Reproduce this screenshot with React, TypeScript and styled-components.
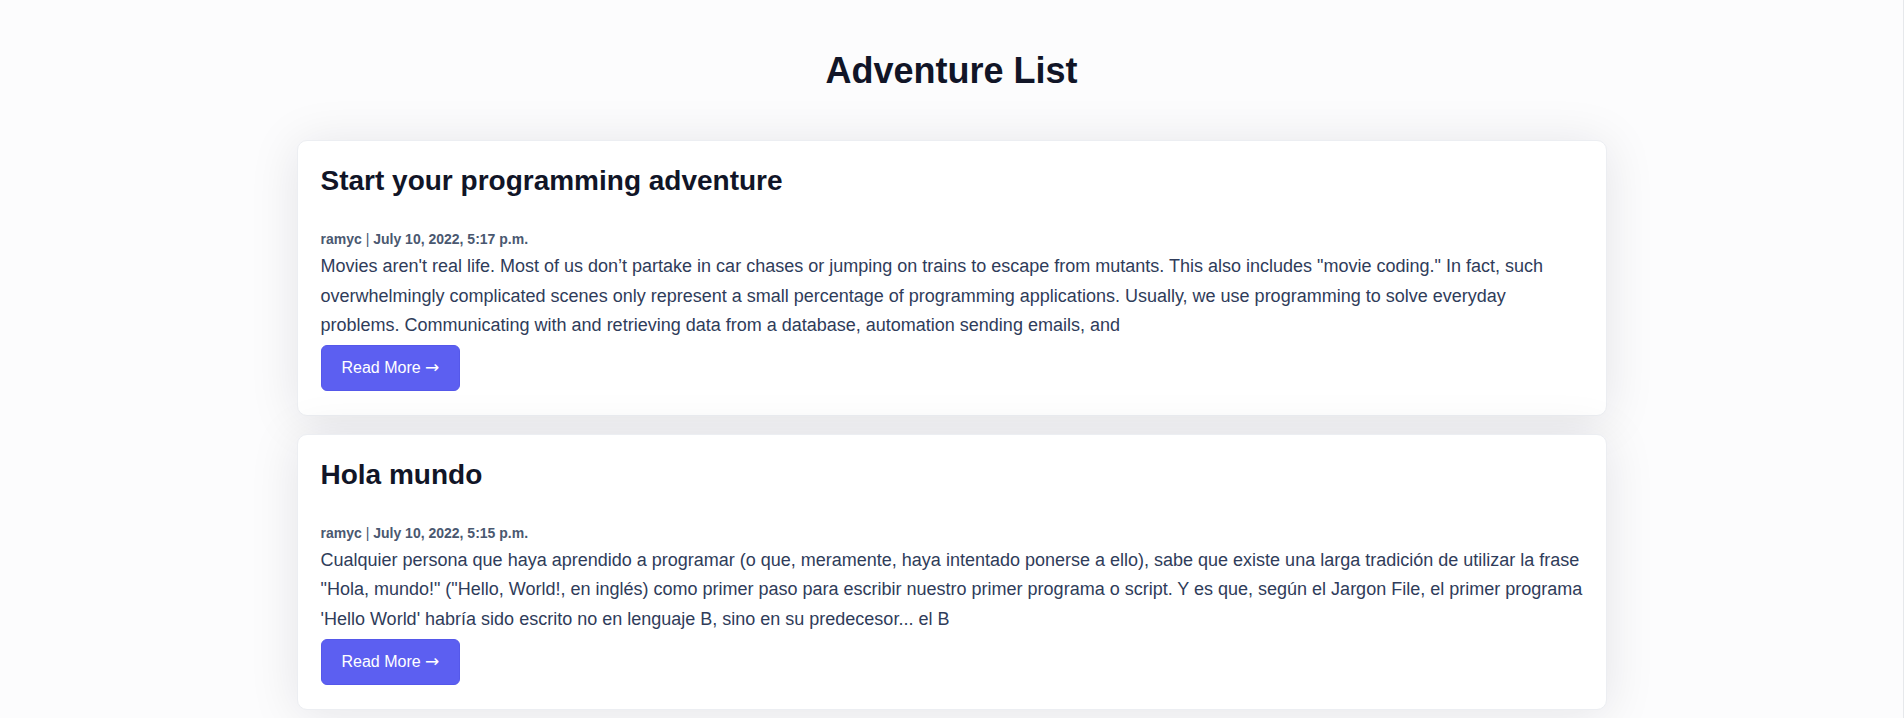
import React from "react";
import styled, { createGlobalStyle } from "styled-components";

const GlobalStyle = createGlobalStyle`
  *, *::before, *::after { box-sizing: border-box; }
  html, body { margin: 0; padding: 0; background: #fcfcfd; }
  body {
    font-family: "Liberation Sans", Arial, sans-serif;
    -webkit-font-smoothing: antialiased;
  }
  #root {
    min-height: 100vh;
    border-right: 1px solid #e6e8eb;
  }
`;

const Page = styled.main`
  padding: 51px 0 8px;
`;

const Heading = styled.h1`
  margin: 0 0 49px;
  text-align: center;
  font-size: 36px;
  line-height: 40px;
  font-weight: 700;
  color: #111527;
`;

const List = styled.div`
  max-width: 1310px;
  margin: 0 auto;
  display: flex;
  flex-direction: column;
  gap: 18px;
`;

const Card = styled.article`
  background: #ffffff;
  border: 1px solid #eceef2;
  border-radius: 10px;
  padding: 24px 22px 24px 23px;
  box-shadow: 0 4px 50px rgba(15, 23, 42, 0.1);
  display: flex;
  flex-direction: column;
  align-items: flex-start;
`;

const Title = styled.h2`
  margin: 0 0 32px;
  font-size: 28px;
  line-height: 32px;
  font-weight: 700;
  color: #111527;
`;

const Meta = styled.div`
  font-size: 14px;
  line-height: 21px;
  font-weight: 700;
  color: #4a5870;
  margin-bottom: 2px;
`;

const Sep = styled.span`
  font-weight: 400;
`;

const Excerpt = styled.p`
  margin: 0 0 4px;
  font-size: 18px;
  line-height: 29.6px;
  color: #2f3c5a;
`;

const ReadMore = styled.a`
  display: inline-block;
  background: #5c5ff1;
  border: 1px solid #5558ea;
  color: #ffffff;
  font-size: 16px;
  line-height: 22px;
  padding: 11px 20px;
  border-radius: 6px;
  text-decoration: none;
  cursor: pointer;
`;

const Arrow = styled.span`
  font-family: "DejaVu Sans", sans-serif;
  font-size: 17px;
  line-height: 1;
`;

type Post = { title: string; author: string; date: string; excerpt: string };

const posts: Post[] = [
  {
    title: "Start your programming adventure",
    author: "ramyc",
    date: "July 10, 2022, 5:17 p.m.",
    excerpt:
      "Movies aren't real life. Most of us don\u2019t partake in car chases or jumping on trains to escape from mutants. This also includes \"movie coding.\" In fact, such overwhelmingly complicated scenes only represent a small percentage of programming applications. Usually, we use programming to solve everyday problems. Communicating with and retrieving data from a database, automation sending emails, and",
  },
  {
    title: "Hola mundo",
    author: "ramyc",
    date: "July 10, 2022, 5:15 p.m.",
    excerpt:
      "Cualquier persona que haya aprendido a programar (o que, meramente, haya intentado ponerse a ello), sabe que existe una larga tradición de utilizar la frase \"Hola, mundo!\" (\"Hello, World!, en inglés) como primer paso para escribir nuestro primer programa o script. Y es que, según el Jargon File, el primer programa 'Hello World' habría sido escrito no en lenguaje B, sino en su predecesor... el B",
  },
];

export default function App() {
  return (
    <>
      <GlobalStyle />
      <Page>
        <Heading>Adventure List</Heading>
        <List>
          {posts.map((p) => (
            <Card key={p.title}>
              <Title>{p.title}</Title>
              <Meta>
                {p.author} <Sep>|</Sep> {p.date}
              </Meta>
              <Excerpt>{p.excerpt}</Excerpt>
              <ReadMore>
                Read More <Arrow>→</Arrow>
              </ReadMore>
            </Card>
          ))}
        </List>
      </Page>
    </>
  );
}
